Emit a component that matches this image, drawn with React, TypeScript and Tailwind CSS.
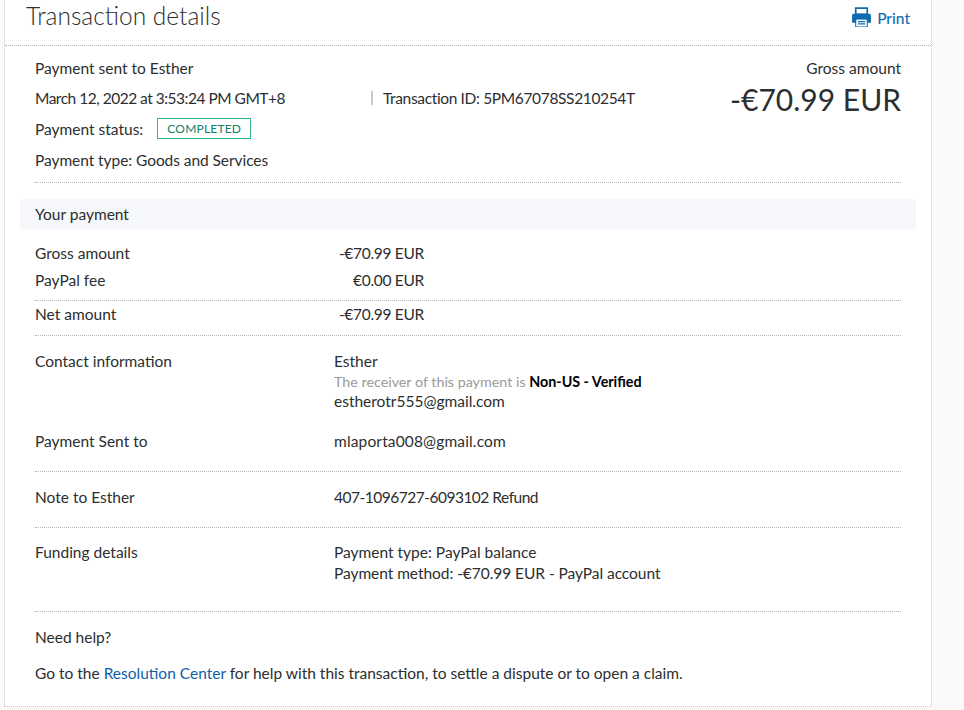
const fontClass = "font-['Lato','Noto_Sans',sans-serif]";

function PrintIcon() {
  return (
    <svg width="21" height="21" viewBox="0 0 20 20" className="shrink-0">
      <path d="M4.500 1h11v6h-11z" fill="none" stroke="#0f6cb0" strokeWidth="1.6" />
      <path d="M2.500 6.500h15a1.500 1.500 0 0 1 1.500 1.500v7h-3v4H4v-4H1V8a1.500 1.500 0 0 1 1.500-1.500z" fill="#0f6cb0" />
      <path d="M5 12h10v6.500H5z" fill="#fff" />
      <path d="M6.500 14h7M6.500 16h7" stroke="#0f6cb0" strokeWidth="1.200" />
    </svg>
  );
}

function AmountRow({ label, value, className }: { label: string; value: string; className: string }) {
  return (
    <div className={`flex ${className}`}>
      <div className="w-[299px]">{label}</div>
      <div className="w-[90px] whitespace-nowrap text-right tracking-[-0.3px]">{value}</div>
    </div>
  );
}

function DetailRow({ label, children, className }: { label: string; children: React.ReactNode; className: string }) {
  return (
    <div className={`flex border-b border-dotted border-[#b5b5b5] ${className}`}>
      <div className="w-[299px]">{label}</div>
      <div>{children}</div>
    </div>
  );
}

export default function App() {
  return (
    <div className={`h-[710px] w-[964px] overflow-hidden bg-[#fafafa] text-[15.5px] leading-[20px] text-[#2c2e2f] ${fontClass}`}>
      <div className="ml-1 h-[707px] w-[928px] border-x border-b border-dotted border-[#c8c8c8] bg-white">
        <div className="flex h-[46px] items-start justify-between border-b border-dotted border-[#b5b5b5] pl-[21px] pr-[21px]">
          <h1 className="mt-[1px] text-[24.5px] font-light leading-[30px] text-[#2c2e2f]">Transaction details</h1>
          <a className="mt-[7px] flex items-center gap-[5px] font-medium text-[#0f6cb0]">
            <PrintIcon />
            Print
          </a>
        </div>

        <div className="mx-[30px] flex h-[137px] justify-between border-b border-dotted border-[#b5b5b5] pt-[12px]">
          <div>
            <div>Payment sent to Esther</div>
            <div className="mt-[10px] flex">
              <span className="w-[336px] tracking-[-0.5px]">March 12, 2022 at 3:53:24 PM GMT+8</span>
              <span className="self-center border-l-2 border-[#c8c8c8] pl-[10px] leading-[14px] tracking-[-0.35px]">Transaction ID: 5PM67078SS210254T</span>
            </div>
            <div className="mt-[10px] flex items-center">
              <span>Payment status:</span>
              <span className="ml-[14px] flex h-[21px] w-[94px] items-center justify-center border border-[#2cb78f] text-[12px] tracking-[0.2px] text-[#12806a]">COMPLETED</span>
            </div>
            <div className="mt-[11px] tracking-[-0.06px]">Payment type: Goods and Services</div>
          </div>
          <div className="text-right">
            <div>Gross amount</div>
            <div className="mt-[1px] text-[30px] leading-[40px]">-€70.99 EUR</div>
          </div>
        </div>

        <div className="mx-[15px] mt-[16px] flex h-[30px] items-center bg-[#f5f7fa] px-[15px]">Your payment</div>

        <div className="mx-[30px]">
          <AmountRow label="Gross amount" value="-€70.99 EUR" className="mt-[14px]" />
          <AmountRow label="PayPal fee" value="€0.00 EUR" className="mt-[7px]" />
          <div className="mt-[10px] border-y border-dotted border-[#b5b5b5] pt-[3px] pb-[11px]">
            <AmountRow label="Net amount" value="-€70.99 EUR" className="" />
          </div>

          <div className="flex pt-[15px]">
            <div className="w-[299px]">Contact information</div>
            <div>
              <div>Esther</div>
              <div className="mt-[1px] text-[14.3px] leading-[19px] text-[#9a9a9a]">
                The receiver of this payment is <span className="font-bold text-black">Non-US - Verified</span>
              </div>
              <div>estherotr555@gmail.com</div>
            </div>
          </div>
          <DetailRow label="Payment Sent to" className="h-[61px] pt-[20px]">
            <span className="tracking-[0.15px]">mlaporta008@gmail.com</span>
          </DetailRow>
          <DetailRow label="Note to Esther" className="h-[56px] pt-[15px]">
            <span className="tracking-[-0.5px]">407-1096727-6093102 Refund</span>
          </DetailRow>
          <DetailRow label="Funding details" className="h-[84px] pt-[14px]">
            <div>Payment type: PayPal balance</div>
            <div className="mt-[1px] tracking-[-0.05px]">Payment method: -€70.99 EUR - PayPal account</div>
          </DetailRow>
          <div className="mt-[15px]">Need help?</div>
          <div className="mt-[16px]">
            Go to the <a className="text-[#0f5fa8]">Resolution Center</a> for help with this transaction, to settle a dispute or to open a claim.
          </div>
        </div>
      </div>
    </div>
  );
}
